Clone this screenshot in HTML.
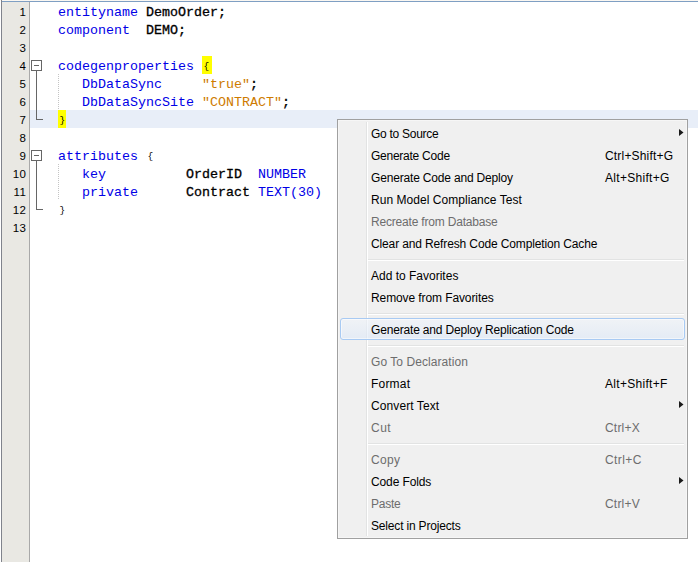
<!DOCTYPE html>
<html><head><meta charset="utf-8">
<style>
html,body{margin:0;padding:0;}
body{width:698px;height:562px;overflow:hidden;background:#fff;position:relative;}
.a{position:absolute;}
#frameL{left:1px;top:0;width:1px;height:562px;background:#80838c;}
#frameT{left:2px;top:1px;width:696px;height:1px;background:#7f9fc3;}
#gutter{left:2px;top:2px;width:27px;height:560px;background:#e9e8e3;}
#gline{left:29px;top:2px;width:1px;height:560px;background:#a9a9a9;}
#curline{left:30px;top:110px;width:668px;height:18px;background:#e8eef8;}
.ln{position:absolute;left:2px;width:24px;text-align:right;font:11.5px/18px "Liberation Sans",sans-serif;padding-top:1px;letter-spacing:0.5px;width:24.5px;color:#000;}
.code{position:absolute;left:58px;font:13.333px/18px "Liberation Mono",monospace;white-space:pre;color:#000;}
.k{color:#0000e6;}
.b{-webkit-text-stroke:0.3px #000;}
.s{color:#ce7b00;}
.br{font-size:9.5px;position:relative;top:-1px;left:1.5px;}
.fold{position:absolute;border:1px solid #666;width:9px;height:9px;background:#fff;}
.fold i{position:absolute;left:2px;top:4px;width:5px;height:1px;background:#666;}
.vl{position:absolute;width:1px;background:#666;}
.hlz{position:absolute;height:1px;background:#666;}
.guide{position:absolute;left:58px;width:1px;background:repeating-linear-gradient(to bottom,#c4c4c4 0,#c4c4c4 1px,transparent 1px,transparent 2px);}
#menu{left:337px;top:119px;width:349px;height:418px;border:1px solid #a0a0a0;background:#f0f0f0;box-shadow:inset 0 0 0 1px #f6f6f6;}
#msep{left:366px;top:122px;width:1px;height:414px;background:#e2e3e3;}
#msep2{left:367px;top:122px;width:1px;height:414px;background:#fff;}
.mi{position:absolute;left:371px;height:22px;font:12px/22px "Liberation Sans",sans-serif;color:#000;white-space:pre;}
.sc{position:absolute;left:605px;height:22px;font:12px/22px "Liberation Sans",sans-serif;color:#000;white-space:pre;}
.dis{color:#6d6d6d;}
.hs{position:absolute;left:368px;width:316px;height:1px;background:#e2e3e3;}
.hs2{position:absolute;left:368px;width:316px;height:1px;background:#fff;}
.arr{position:absolute;left:679px;width:0;height:0;border-top:3.5px solid transparent;border-bottom:3.5px solid transparent;border-left:4.5px solid #1a1a1a;}
#sel{left:340px;top:318px;width:343px;height:20px;border:1px solid #a8caf3;border-radius:3px;background:linear-gradient(to bottom,rgba(240,244,250,.6),rgba(220,232,248,.6));box-shadow:inset 0 0 0 1px rgba(255,255,255,.5);}
</style></head><body>
<div class="a" style="left:0;top:0;width:698px;height:1px;background:#faf7f2"></div>
<div class="a" id="frameL"></div>
<div class="a" id="frameT"></div>
<div class="a" id="gutter"></div>
<div class="a" id="gline"></div>
<div class="a" id="curline"></div>

<div class="ln" style="top:2px">1</div>
<div class="ln" style="top:20px">2</div>
<div class="ln" style="top:38px">3</div>
<div class="ln" style="top:56px">4</div>
<div class="ln" style="top:74px">5</div>
<div class="ln" style="top:92px">6</div>
<div class="ln" style="top:110px">7</div>
<div class="ln" style="top:128px">8</div>
<div class="ln" style="top:146px">9</div>
<div class="ln" style="top:164px">10</div>
<div class="ln" style="top:182px">11</div>
<div class="ln" style="top:200px">12</div>
<div class="ln" style="top:218px">13</div>

<div class="code" style="top:4px"><span class="k">entityname</span> <span class="b">DemoOrder;</span></div>
<div class="code" style="top:22px"><span class="k">component</span>  <span class="b">DEMO;</span></div>
<div class="a" style="left:202px;top:56px;width:10px;height:18px;background:#ffff00"></div>
<div class="code" style="top:58px"><span class="k">codegenproperties</span> <span class="br">{</span></div>
<div class="code" style="top:76px">   <span class="k">DbDataSync</span>     <span class="s">"true"</span><span class="b">;</span></div>
<div class="code" style="top:94px">   <span class="k">DbDataSyncSite</span> <span class="s">"CONTRACT"</span><span class="b">;</span></div>
<div class="a" style="left:58px;top:110px;width:8px;height:18px;background:#ffff00"></div>
<div class="code" style="top:112px"><span class="br">}</span></div>
<div class="code" style="top:148px"><span class="k">attributes</span> <span class="br">{</span></div>
<div class="code" style="top:166px">   <span class="k">key</span>          <span class="b">OrderID</span>  <span class="k">NUMBER</span></div>
<div class="code" style="top:184px">   <span class="k">private</span>      <span class="b">Contract</span> <span class="k">TEXT(30)</span></div>
<div class="code" style="top:202px"><span class="br">}</span></div>

<div class="fold" style="left:31px;top:60px"><i></i></div>
<div class="vl" style="left:36px;top:71px;height:49px"></div>
<div class="hlz" style="left:36px;top:119px;width:7px"></div>
<div class="guide" style="top:74px;height:36px"></div>

<div class="fold" style="left:31px;top:150px"><i></i></div>
<div class="vl" style="left:36px;top:161px;height:49px"></div>
<div class="hlz" style="left:36px;top:209px;width:7px"></div>
<div class="guide" style="top:164px;height:36px"></div>

<div class="a" id="menu"></div>
<div class="a" id="msep"></div>
<div class="a" id="msep2"></div>

<div class="mi" style="top:123px;letter-spacing:-0.273px">Go to Source</div><svg class="a" style="left:678px;top:129px" width="8" height="9"><polygon points="1,0 5.5,3.5 1,7" fill="#1a1a1a"/></svg>
<div class="mi" style="top:145px;letter-spacing:-0.250px">Generate Code</div><div class="sc" style="top:145px;letter-spacing:0.182px">Ctrl+Shift+G</div>
<div class="mi" style="top:167px;letter-spacing:-0.174px">Generate Code and Deploy</div><div class="sc" style="top:167px;letter-spacing:0.300px">Alt+Shift+G</div>
<div class="mi" style="top:189px;letter-spacing:0.042px">Run Model Compliance Test</div>
<div class="mi dis" style="top:211px;letter-spacing:-0.190px">Recreate from Database</div>
<div class="mi" style="top:233px;letter-spacing:-0.132px">Clear and Refresh Code Completion Cache</div>
<div class="hs" style="top:259px"></div><div class="hs2" style="top:260px"></div>
<div class="mi" style="top:265px;letter-spacing:0.000px">Add to Favorites</div>
<div class="mi" style="top:287px;letter-spacing:-0.100px">Remove from Favorites</div>
<div class="hs" style="top:313px"></div><div class="hs2" style="top:314px"></div>
<div class="a" id="sel"></div>
<div class="mi" style="top:319px;letter-spacing:-0.171px">Generate and Deploy Replication Code</div>
<div class="hs" style="top:345px"></div><div class="hs2" style="top:346px"></div>
<div class="mi dis" style="top:351px;letter-spacing:0.062px">Go To Declaration</div>
<div class="mi" style="top:373px;letter-spacing:0.200px">Format</div><div class="sc" style="top:373px;letter-spacing:0.300px">Alt+Shift+F</div>
<div class="mi" style="top:395px;letter-spacing:0.091px">Convert Text</div><svg class="a" style="left:678px;top:401px" width="8" height="9"><polygon points="1,0 5.5,3.5 1,7" fill="#1a1a1a"/></svg>
<div class="mi dis" style="top:417px;letter-spacing:0.500px">Cut</div><div class="sc dis" style="top:417px;letter-spacing:0.200px">Ctrl+X</div>
<div class="hs" style="top:443px"></div><div class="hs2" style="top:444px"></div>
<div class="mi dis" style="top:449px;letter-spacing:0.333px">Copy</div><div class="sc dis" style="top:449px;letter-spacing:0.400px">Ctrl+C</div>
<div class="mi" style="top:471px;letter-spacing:-0.111px">Code Folds</div><svg class="a" style="left:678px;top:477px" width="8" height="9"><polygon points="1,0 5.5,3.5 1,7" fill="#1a1a1a"/></svg>
<div class="mi dis" style="top:493px;letter-spacing:-0.250px">Paste</div><div class="sc dis" style="top:493px;letter-spacing:0.200px">Ctrl+V</div>
<div class="mi" style="top:515px;letter-spacing:-0.176px">Select in Projects</div>
</body></html>
